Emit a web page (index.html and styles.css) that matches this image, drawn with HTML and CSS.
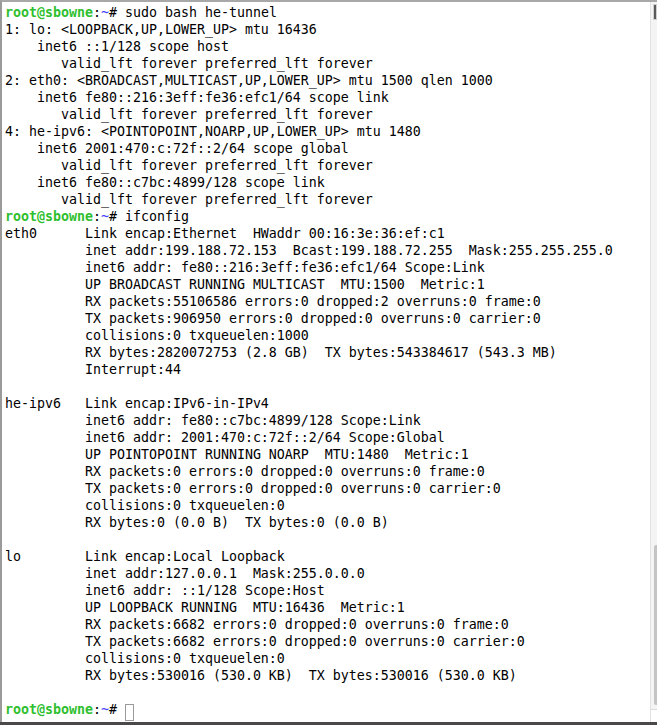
FILE: index.html
```html
<!DOCTYPE html>
<html>
<head>
<meta charset="utf-8">
<link rel="stylesheet" href="styles.css">
</head>
<body>
<div class="window">
  <div class="main">
    <pre class="term"><span class="u">root@sbowne</span>:<span class="t">~</span># sudo bash he-tunnel
1: lo: &lt;LOOPBACK,UP,LOWER_UP&gt; mtu 16436
    inet6 ::1/128 scope host
       valid_lft forever preferred_lft forever
2: eth0: &lt;BROADCAST,MULTICAST,UP,LOWER_UP&gt; mtu 1500 qlen 1000
    inet6 fe80::216:3eff:fe36:efc1/64 scope link
       valid_lft forever preferred_lft forever
4: he-ipv6: &lt;POINTOPOINT,NOARP,UP,LOWER_UP&gt; mtu 1480
    inet6 2001:470:c:72f::2/64 scope global
       valid_lft forever preferred_lft forever
    inet6 fe80::c7bc:4899/128 scope link
       valid_lft forever preferred_lft forever
<span class="u">root@sbowne</span>:<span class="t">~</span># ifconfig
eth0      Link encap:Ethernet  HWaddr 00:16:3e:36:ef:c1
          inet addr:199.188.72.153  Bcast:199.188.72.255  Mask:255.255.255.0
          inet6 addr: fe80::216:3eff:fe36:efc1/64 Scope:Link
          UP BROADCAST RUNNING MULTICAST  MTU:1500  Metric:1
          RX packets:55106586 errors:0 dropped:2 overruns:0 frame:0
          TX packets:906950 errors:0 dropped:0 overruns:0 carrier:0
          collisions:0 txqueuelen:1000
          RX bytes:2820072753 (2.8 GB)  TX bytes:543384617 (543.3 MB)
          Interrupt:44

he-ipv6   Link encap:IPv6-in-IPv4
          inet6 addr: fe80::c7bc:4899/128 Scope:Link
          inet6 addr: 2001:470:c:72f::2/64 Scope:Global
          UP POINTOPOINT RUNNING NOARP  MTU:1480  Metric:1
          RX packets:0 errors:0 dropped:0 overruns:0 frame:0
          TX packets:0 errors:0 dropped:0 overruns:0 carrier:0
          collisions:0 txqueuelen:0
          RX bytes:0 (0.0 B)  TX bytes:0 (0.0 B)

lo        Link encap:Local Loopback
          inet addr:127.0.0.1  Mask:255.0.0.0
          inet6 addr: ::1/128 Scope:Host
          UP LOOPBACK RUNNING  MTU:16436  Metric:1
          RX packets:6682 errors:0 dropped:0 overruns:0 frame:0
          TX packets:6682 errors:0 dropped:0 overruns:0 carrier:0
          collisions:0 txqueuelen:0
          RX bytes:530016 (530.0 KB)  TX bytes:530016 (530.0 KB)

<span class="u">root@sbowne</span>:<span class="t">~</span># <span class="cursor"> </span></pre>
  </div>
  <div class="scrollbar">
    <div class="peek"></div>
    <div class="track"><div class="thumb"></div></div>
    <div class="corner"></div>
  </div>
</div>
<div class="desk"></div>
</body>
</html>
```
FILE: styles.css
```css
html, body {
  margin: 0;
  padding: 0;
  background: #ffffff;
}
body {
  width: 657px;
  height: 725px;
  overflow: hidden;
  display: flex;
  flex-direction: column;
}
.window {
  flex: 1;
  display: flex;
  border-top: 2px solid #a8a8a8;
  border-left: 2px solid #9a9a9a;
  background: #ffffff;
}
.main {
  flex: 1;
  min-width: 0;
}
.term {
  margin: 0;
  padding: 2px 0 0 3px;
  font-family: "DejaVu Sans Mono", monospace;
  font-size: 13.29px;
  line-height: 17px;
  color: #000000;
  white-space: pre;
}
.u {
  color: #2fbf2f;
  font-weight: bold;
}
.t {
  color: #4646ff;
}
.cursor {
  display: inline-block;
  width: 7px;
  height: 15px;
  border: 1px solid #9a9a9a;
  vertical-align: -4px;
}
.scrollbar {
  width: 6px;
  display: flex;
  flex-direction: column;
  border-left: 1px solid #e2e2e2;
  background: #f4f4f4;
}
.peek {
  height: 14px;
  margin-top: 2px;
  margin-left: 2px;
  background: #5a5a5a;
  border: 1px solid #cfcfcf;
}
.track {
  flex: 1;
  display: flex;
  flex-direction: column;
  justify-content: flex-end;
  padding-bottom: 4px;
}
.thumb {
  height: 160px;
  margin-left: 3px;
  background: #c4c4c4;
  border-radius: 2px 0 0 2px;
}
.corner {
  height: 12px;
  border-top: 1px solid #dcdcdc;
  background: #ffffff;
}
.desk {
  height: 3px;
  background: #4a4848;
}
```
